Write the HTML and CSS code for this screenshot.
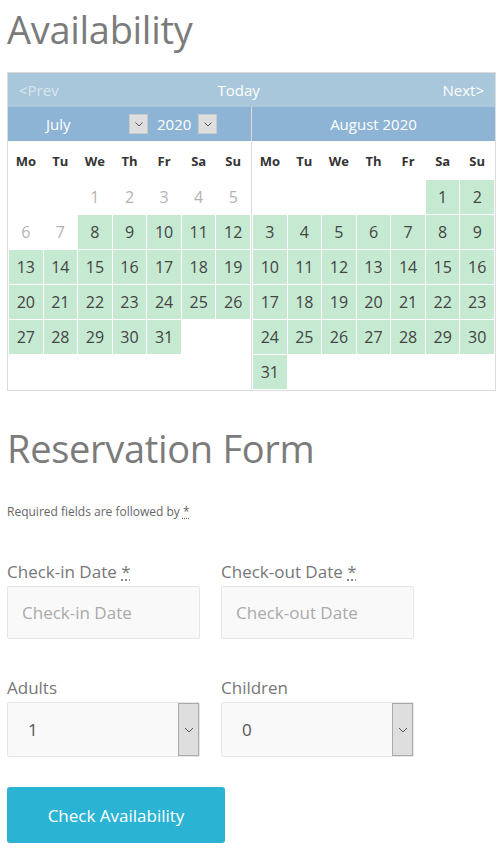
FILE: index.html
```html
<!DOCTYPE html>
<html lang="en">
<head>
    <meta charset="UTF-8">
    <meta name="viewport" content="width=device-width, initial-scale=1.0">
    <title>Availability</title>
    <link rel="stylesheet" href="styles.css">
</head>
<body>
    <h1 class="page-title">Availability</h1>

    <div class="datepicker">
        <div class="dp-nav">
            <span class="dp-prev">&lt;Prev</span>
            <span class="dp-today">Today</span>
            <span class="dp-next">Next&gt;</span>
        </div>
        <div class="dp-months">
            <div class="dp-month">
                <div class="dp-title">
                    <span class="dp-select dp-select-month">July<span class="dp-arrow"><svg width="8" height="5" viewBox="0 0 8 5"><path d="M0.5 0.5 L4 4 L7.5 0.5" fill="none" stroke="#555" stroke-width="1"/></svg></span></span>
                    <span class="dp-select dp-select-year">2020<span class="dp-arrow"><svg width="8" height="5" viewBox="0 0 8 5"><path d="M0.5 0.5 L4 4 L7.5 0.5" fill="none" stroke="#555" stroke-width="1"/></svg></span></span>
                </div>
                <div class="dp-grid" id="july"></div>
            </div>
            <div class="dp-month last">
                <div class="dp-title">August 2020</div>
                <div class="dp-grid" id="august"></div>
            </div>
        </div>
    </div>

    <h2 class="page-title form-title">Reservation Form</h2>
    <p class="required-note">Required fields are followed by <abbr title="required">*</abbr></p>

    <div class="form-row">
        <div class="field">
            <label>Check-in Date <abbr title="required">*</abbr></label>
            <div class="input placeholder">Check-in Date</div>
        </div>
        <div class="field">
            <label>Check-out Date <abbr title="required">*</abbr></label>
            <div class="input placeholder">Check-out Date</div>
        </div>
    </div>

    <div class="form-row">
        <div class="field">
            <label>Adults</label>
            <div class="input select">
                <span class="select-value">1</span>
                <span class="select-arrow"><svg width="10" height="6" viewBox="0 0 10 6"><path d="M1 1 L5 5 L9 1" fill="none" stroke="#555" stroke-width="1"/></svg></span>
            </div>
        </div>
        <div class="field">
            <label>Children</label>
            <div class="input select">
                <span class="select-value">0</span>
                <span class="select-arrow"><svg width="10" height="6" viewBox="0 0 10 6"><path d="M1 1 L5 5 L9 1" fill="none" stroke="#555" stroke-width="1"/></svg></span>
            </div>
        </div>
    </div>

    <button class="btn-check">Check Availability</button>

    <script>
        // Build the two month grids: offset = weekday of the 1st (Mo = 0)
        const heads = ['Mo', 'Tu', 'We', 'Th', 'Fr', 'Sa', 'Su'];

        function buildMonth(el, offset, days, firstAvailable) {
            heads.forEach(h => {
                const d = document.createElement('div');
                d.className = 'dp-head';
                d.textContent = h;
                el.appendChild(d);
            });
            for (let i = 0; i < offset; i++) {
                const d = document.createElement('div');
                d.className = 'dp-day empty';
                el.appendChild(d);
            }
            for (let n = 1; n <= days; n++) {
                const d = document.createElement('div');
                d.className = 'dp-day ' + (n >= firstAvailable ? 'available' : 'past');
                d.textContent = n;
                el.appendChild(d);
            }
            // pad to six rows
            const total = offset + days;
            for (let i = total; i < 42; i++) {
                const d = document.createElement('div');
                d.className = 'dp-day empty';
                el.appendChild(d);
            }
        }

        buildMonth(document.getElementById('july'), 2, 31, 8);
        buildMonth(document.getElementById('august'), 5, 31, 1);
    </script>
</body>
</html>
```

FILE: styles.css
```css
body {
    margin: 0;
    padding: 0 7px;
    font-family: "Open Sans", "Noto Sans", sans-serif;
    color: #555;
    background: #fff;
}
.page-title {
    font-weight: 400;
    color: #7b7b7b;
    font-size: 38px;
    line-height: 1;
    margin: 10px 0 24px;
    letter-spacing: -0.3px;
}
.form-title {
    margin: 38px 0 0;
}

/* datepicker */
.datepicker {
    width: 489px;
    border: 1px solid #dcdcdc;
    box-sizing: border-box;
}
.dp-nav {
    display: flex;
    justify-content: space-between;
    align-items: center;
    height: 34px;
    padding: 0 11px;
    background: #a8c7da;
    color: #fff;
    font-size: 15px;
}
.dp-prev {
    color: #d8e6ef;
}
.dp-today {
    margin-right: 24px;
}
.dp-months {
    display: flex;
}
.dp-month {
    flex: 1;
    border-right: 1px solid #dcdcdc;
}
.dp-month.last {
    border-right: none;
}
.dp-title {
    height: 34px;
    background: #8db4d4;
    color: #fff;
    font-size: 15px;
    display: flex;
    align-items: center;
    justify-content: center;
}
.dp-month:first-child .dp-title {
    justify-content: flex-start;
}
.dp-select {
    display: flex;
    align-items: center;
}
.dp-select-month {
    padding-left: 38px;
    width: 102px;
    justify-content: space-between;
}
.dp-select-year {
    margin-left: 9px;
    gap: 7px;
}
.dp-arrow {
    width: 19px;
    height: 20px;
    background: #dedede;
    border: 1px solid #c9c9c9;
    box-sizing: border-box;
    display: flex;
    align-items: center;
    justify-content: center;
}
.dp-grid {
    display: grid;
    grid-template-columns: repeat(7, 1fr);
    grid-template-rows: 38px repeat(6, 34px);
    gap: 1px;
    padding: 0 1px 1px;
}
.dp-head {
    display: flex;
    align-items: center;
    justify-content: center;
    font-size: 13px;
    font-weight: 700;
    color: #333;
    padding-top: 2px;
}
.dp-day {
    display: flex;
    align-items: center;
    justify-content: center;
    font-size: 16px;
}
.dp-day.available {
    background: #c6e9d2;
    color: #444;
}
.dp-day.past {
    color: #b3b3b3;
}

/* form */
.required-note {
    font-size: 12px;
    color: #666;
    margin: 36px 0 0;
}
abbr {
    text-decoration: underline dotted;
    text-underline-offset: 2px;
}
.form-row {
    display: flex;
    gap: 21px;
    margin-top: 40px;
}
.form-row + .form-row {
    margin-top: 37px;
}
.field {
    width: 193px;
    display: flex;
    flex-direction: column;
}
.field label {
    font-size: 17px;
    color: #777;
    margin-bottom: 3px;
}
.input {
    height: 53px;
    background: #f9f9f9;
    border: 1px solid #e6e6e6;
    border-radius: 2px;
    box-sizing: border-box;
    display: flex;
    align-items: center;
    font-size: 17px;
}
.placeholder {
    color: #aaa;
    padding-left: 14px;
}
.select {
    height: 55px;
    justify-content: space-between;
}
.select-value {
    padding-left: 20px;
    color: #555;
}
.select-arrow {
    width: 21px;
    height: 100%;
    box-sizing: border-box;
    background: #dedede;
    border: 1px solid #aaa;
    display: flex;
    align-items: center;
    justify-content: center;
}
.btn-check {
    margin-top: 30px;
    width: 218px;
    height: 56px;
    background: #2ab3d3;
    color: #fff;
    border: none;
    border-radius: 3px;
    font-family: inherit;
    font-size: 17px;
}
```
